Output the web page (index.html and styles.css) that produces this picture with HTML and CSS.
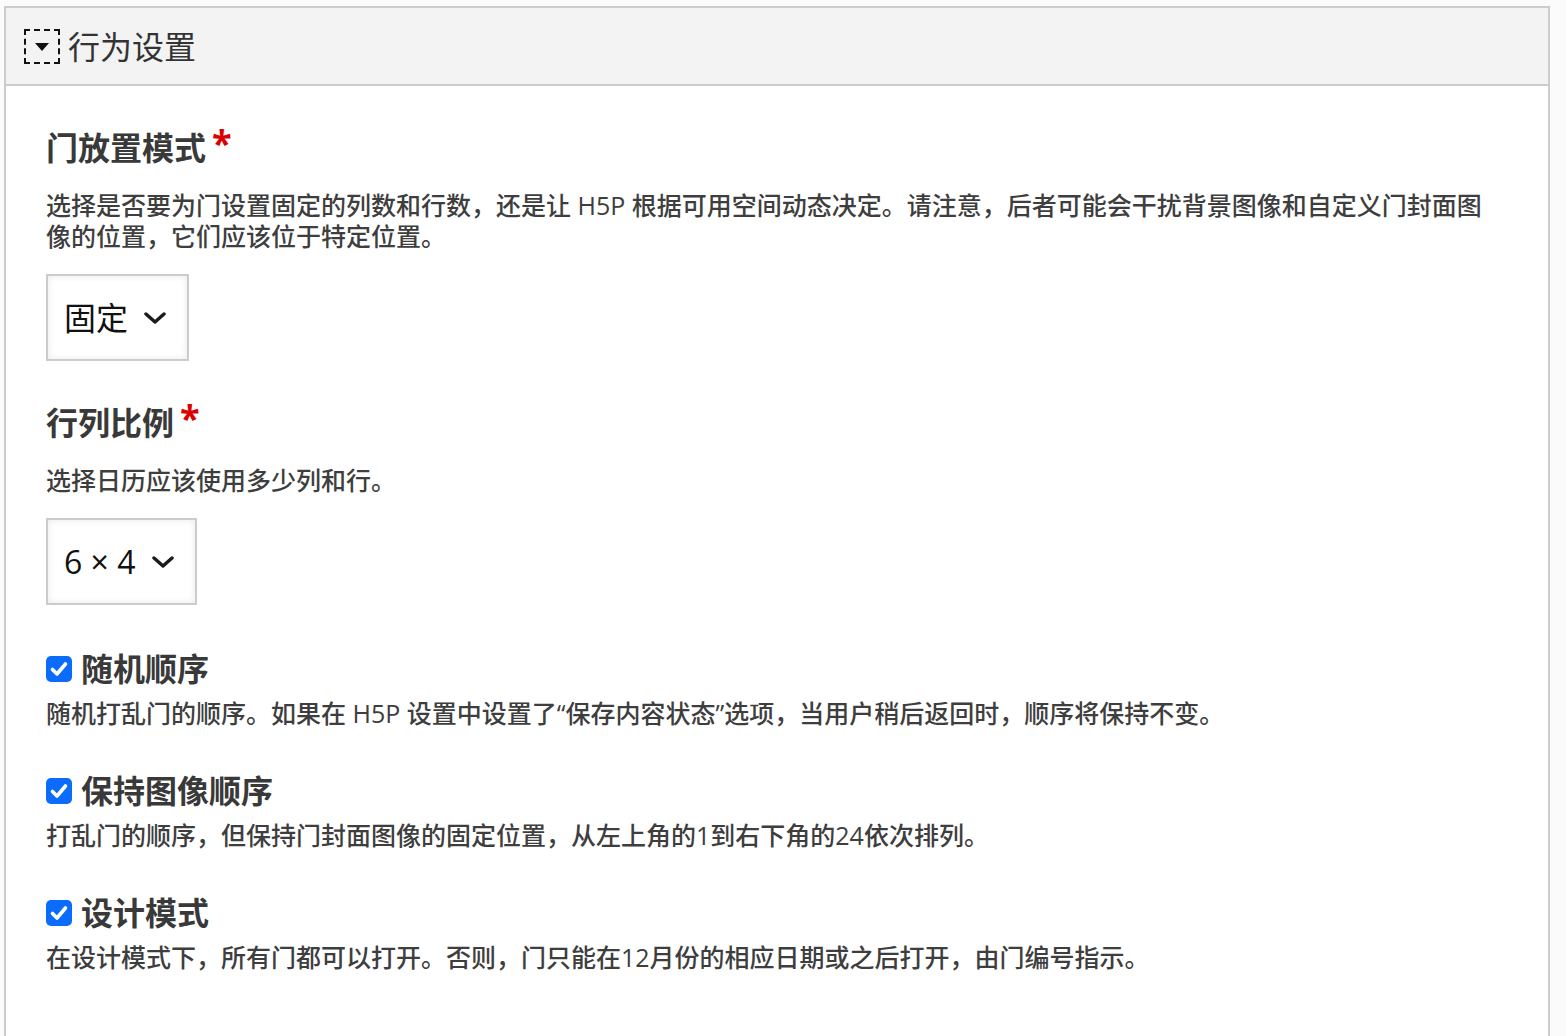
FILE: index.html
```html
<!DOCTYPE html>
<html lang="zh-CN">
<head>
<meta charset="utf-8">
<title>行为设置</title>
<link rel="stylesheet" href="styles.css">
</head>
<body>
<div class="group">
  <div class="group-title">
    <span class="toggle"><span class="tri"></span></span>
    <span class="group-text">行为设置</span>
  </div>
  <div class="content">
    <div class="field">
      <div class="label">门放置模式<span class="req">*</span></div>
      <div class="desc">选择是否要为门设置固定的列数和行数，还是让 H5P 根据可用空间动态决定。请注意，后者可能会干扰背景图像和自定义门封面图像的位置，它们应该位于特定位置。</div>
      <div class="select">
        <span>固定</span>
        <svg class="chev" width="24" height="12" viewBox="0 0 24 12"><polyline points="3,2 12,10 21,2" fill="none" stroke="#1b1b1b" stroke-width="3.4" stroke-linecap="round" stroke-linejoin="round"/></svg>
      </div>
    </div>
    <div class="field">
      <div class="label">行列比例<span class="req">*</span></div>
      <div class="desc">选择日历应该使用多少列和行。</div>
      <div class="select">
        <span>6 × 4</span>
        <svg class="chev" width="24" height="12" viewBox="0 0 24 12"><polyline points="3,2 12,10 21,2" fill="none" stroke="#1b1b1b" stroke-width="3.4" stroke-linecap="round" stroke-linejoin="round"/></svg>
      </div>
    </div>
    <div class="field check-field first-check">
      <div class="check-row">
        <span class="checkbox"><svg width="26" height="26" viewBox="0 0 26 26"><polyline points="6.5,13.5 11,18 19.5,8" fill="none" stroke="#fff" stroke-width="3.6" stroke-linecap="round" stroke-linejoin="round"/></svg></span>
        <span class="check-label">随机顺序</span>
      </div>
      <div class="desc check-desc">随机打乱门的顺序。如果在 H5P 设置中设置了“保存内容状态”选项，当用户稍后返回时，顺序将保持不变。</div>
    </div>
    <div class="field check-field">
      <div class="check-row">
        <span class="checkbox"><svg width="26" height="26" viewBox="0 0 26 26"><polyline points="6.5,13.5 11,18 19.5,8" fill="none" stroke="#fff" stroke-width="3.6" stroke-linecap="round" stroke-linejoin="round"/></svg></span>
        <span class="check-label">保持图像顺序</span>
      </div>
      <div class="desc check-desc">打乱门的顺序，但保持门封面图像的固定位置，从左上角的1到右下角的24依次排列。</div>
    </div>
    <div class="field check-field">
      <div class="check-row">
        <span class="checkbox"><svg width="26" height="26" viewBox="0 0 26 26"><polyline points="6.5,13.5 11,18 19.5,8" fill="none" stroke="#fff" stroke-width="3.6" stroke-linecap="round" stroke-linejoin="round"/></svg></span>
        <span class="check-label">设计模式</span>
      </div>
      <div class="desc check-desc">在设计模式下，所有门都可以打开。否则，门只能在12月份的相应日期或之后打开，由门编号指示。</div>
    </div>
  </div>
</div>
</body>
</html>
```

FILE: styles.css
```css
html, body {
  margin: 0;
  padding: 0;
  height: 100%;
  overflow: hidden;
}
body {
  background: #fbfbfb;
  font-family: "Open Sans", "Noto Sans CJK SC", sans-serif;
  color: #333;
}
.group {
  box-sizing: border-box;
  width: 1546px;
  margin: 6px 0 0 4px;
  border: 2px solid #cccccc;
  border-bottom: none;
  background: #ffffff;
}
.group-title {
  box-sizing: border-box;
  height: 78px;
  background: #f3f3f3;
  border-bottom: 2px solid #cccccc;
  display: flex;
  align-items: center;
  padding: 1px 0 0 18px;
  gap: 8px;
}
.toggle {
  box-sizing: border-box;
  width: 36px;
  height: 35px;
  border: 2px dashed #111;
  display: flex;
  align-items: center;
  justify-content: center;
}
.tri {
  width: 0;
  height: 0;
  border-left: 7px solid transparent;
  border-right: 7px solid transparent;
  border-top: 8px solid #111;
}
.group-text {
  font-size: 32px;
  line-height: 40px;
  color: #333;
  font-weight: 400;
}
.content {
  padding: 42px 52px 120px 40px;
}
.field {
  margin-bottom: 42px;
}
.label {
  font-size: 32px;
  line-height: 40px;
  font-weight: 700;
  color: #393939;
  margin-bottom: 21.5px;
}
.req {
  color: #dd0000;
  font-size: 36px;
  font-weight: 700;
  margin-left: 6px;
  vertical-align: 4px;
  line-height: 0;
}
.desc {
  font-size: 25px;
  line-height: 31px;
  color: #3e3e3e;
  font-weight: 500;
  margin-bottom: 22.5px;
}
.select {
  box-sizing: border-box;
  height: 87px;
  display: inline-flex;
  align-items: center;
  gap: 15px;
  padding: 0 20px 0 16px;
  border: 2px solid #cccccc;
  background: #ffffff;
  box-shadow: inset 0 0 7px rgba(0, 0, 0, 0.09);
  font-size: 32px;
  line-height: 40px;
  color: #111;
}
.chev {
  display: block;
  flex: none;
}
.first-check {
  padding-top: 1.5px;
}
.check-row {
  display: flex;
  align-items: center;
  height: 40px;
}
.checkbox {
  flex: none;
  width: 26px;
  height: 26px;
  border-radius: 5px;
  background: #0b6cfb;
  margin-right: 9px;
  display: flex;
}
.checkbox svg {
  display: block;
}
.check-label {
  font-size: 32px;
  line-height: 40px;
  font-weight: 700;
  color: #393939;
}
.check-desc {
  margin-top: 9px;
  margin-bottom: 0;
}
```
